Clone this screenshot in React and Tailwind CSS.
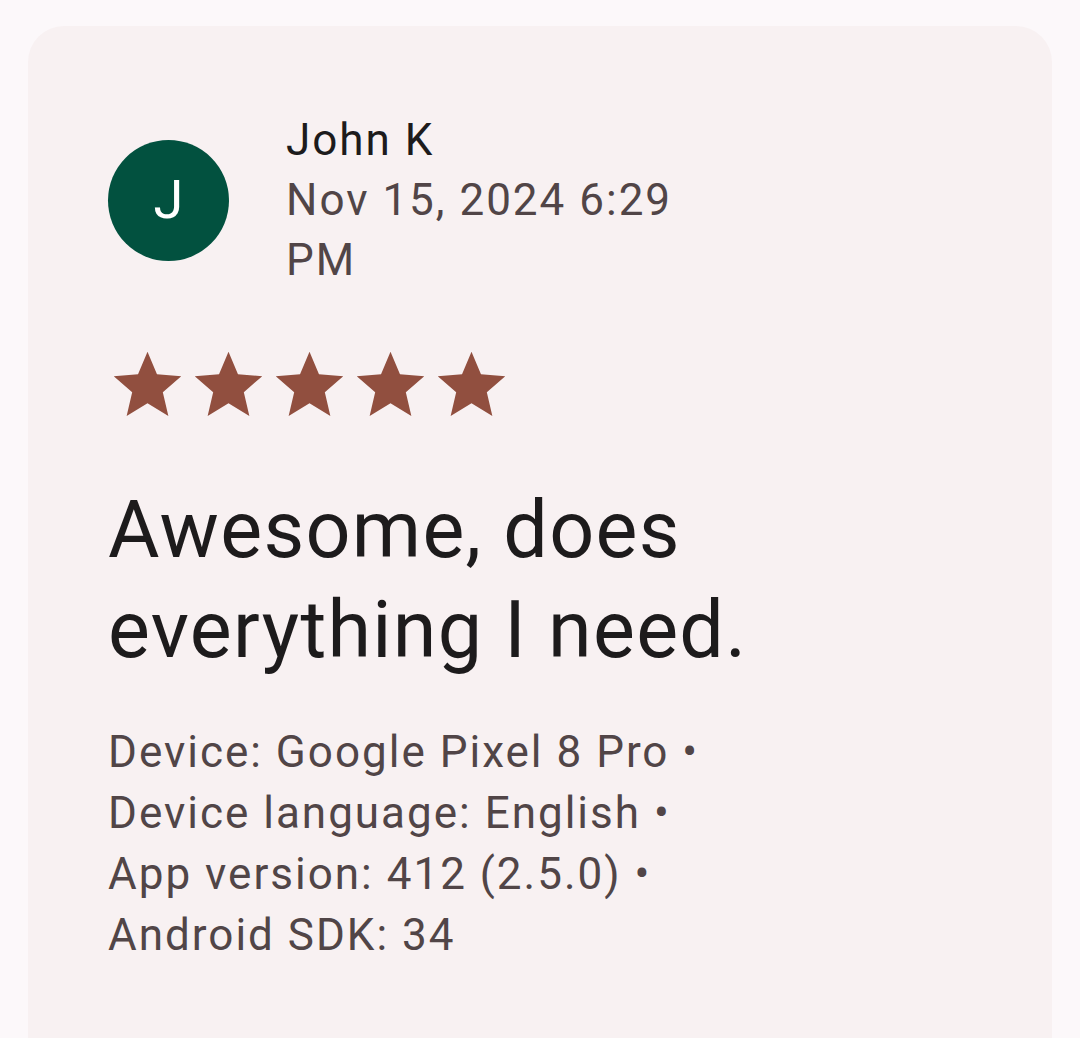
import React from "react";

const Star = () => (
  <svg viewBox="0 0 24 24" className="w-[81px] h-[81px]" fill="#914f3f">
    <path d="M12 17.27L18.18 21l-1.64-7.03L22 9.24l-7.19-.61L12 2 9.19 8.63 2 9.24l5.46 4.73L5.82 21z" />
  </svg>
);

export default function App() {
  return (
    <div className="min-h-screen bg-[#fcf8fa] px-[28px] pt-[26px] font-['Roboto',sans-serif]">
      <div className="rounded-[36px] bg-[#f8f1f2] pl-[80px] pr-[80px] pt-[84px] pb-[120px]">
        {/* header */}
        <div className="flex items-center gap-[57px]">
          <div className="w-[121px] h-[121px] rounded-full bg-[#02513f] flex items-center justify-center shrink-0">
            <span className="text-white text-[54px] leading-none">J</span>
          </div>
          <div className="text-[44px] leading-[60px] tracking-[2px]">
            <p className="text-[#1d1b1c]">John K</p>
            <p className="text-[#514547]">
              Nov 15, 2024 6:29
              <br />
              PM
            </p>
          </div>
        </div>

        {/* rating */}
        <div className="flex mt-[55px] -ml-[1px]">
          <Star />
          <Star />
          <Star />
          <Star />
          <Star />
        </div>

        {/* title */}
        <h2 className="mt-[54px] text-[79px] leading-[100px] tracking-[1.3px] text-[#1d1b1c]">
          Awesome, does
          <br />
          everything I need.
        </h2>

        {/* device info */}
        <div className="mt-[42px] text-[44px] leading-[61px] tracking-[2px] text-[#514547]">
          <p>Device: Google Pixel 8 Pro •</p>
          <p>Device language: English •</p>
          <p>App version: 412 (2.5.0) •</p>
          <p>Android SDK: 34</p>
        </div>
      </div>
    </div>
  );
}
